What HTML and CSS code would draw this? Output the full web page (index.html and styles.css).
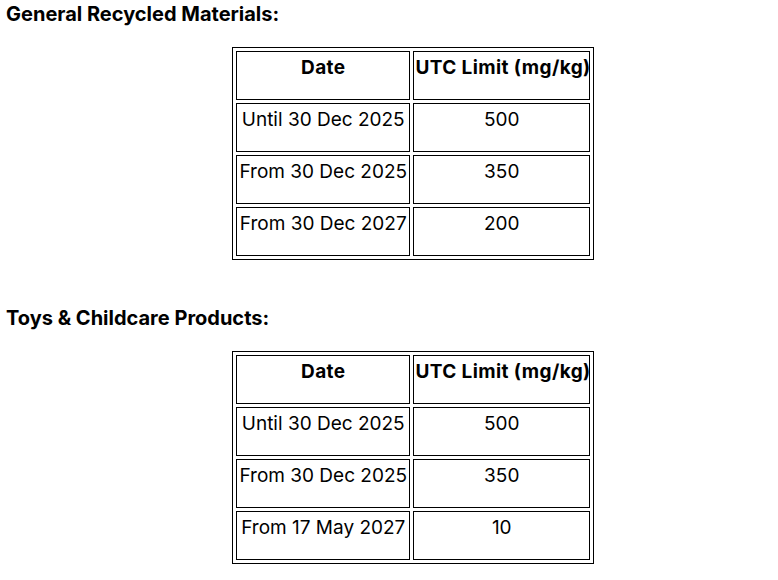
FILE: index.html
```html
<!DOCTYPE html>
<html lang="en">
<head>
<meta charset="utf-8">
<link rel="stylesheet" href="styles.css">
</head>
<body>
<div class="page">
  <p class="heading heading-first">General Recycled Materials:</p>
  <table class="limits">
    <tr><th class="col-date">Date</th><th class="col-limit">UTC Limit (mg/kg)</th></tr>
    <tr><td>Until 30 Dec 2025</td><td>500</td></tr>
    <tr><td>From 30 Dec 2025</td><td>350</td></tr>
    <tr><td>From 30 Dec 2027</td><td>200</td></tr>
  </table>

  <p class="heading heading-second">Toys &amp; Childcare Products:</p>
  <table class="limits">
    <tr><th class="col-date">Date</th><th class="col-limit">UTC Limit (mg/kg)</th></tr>
    <tr><td>Until 30 Dec 2025</td><td>500</td></tr>
    <tr><td>From 30 Dec 2025</td><td>350</td></tr>
    <tr><td>From 17 May 2027</td><td>10</td></tr>
  </table>
</div>
</body>
</html>
```
FILE: styles.css
```css
html, body {
  margin: 0;
  padding: 0;
  background: #ffffff;
}

.page {
  padding-left: 6px;
  font-family: "Inter", "Open Sans", sans-serif;
  color: #000000;
}

.heading {
  margin: 0;
  font-size: 20px;
  line-height: 24px;
  font-weight: 700;
}

.heading-first {
  padding-top: 2px;
}

.heading-second {
  margin-top: 46px;
}

.limits {
  width: 362px;
  margin: 21px 0 0 226px;
  border: 1px solid #000000;
  border-collapse: separate;
  border-spacing: 3px;
  table-layout: fixed;
}

.limits th,
.limits td {
  box-sizing: border-box;
  height: 49px;
  border: 1px solid #000000;
  padding: 4px 1px 0;
  vertical-align: top;
  text-align: center;
  font-size: 19px;
  line-height: 23px;
  white-space: nowrap;
}

.limits th {
  font-weight: 700;
  letter-spacing: 0.4px;
}

.limits td {
  font-weight: 400;
}

.col-date {
  width: 174px;
}

.col-limit {
  width: 176px;
}
```
